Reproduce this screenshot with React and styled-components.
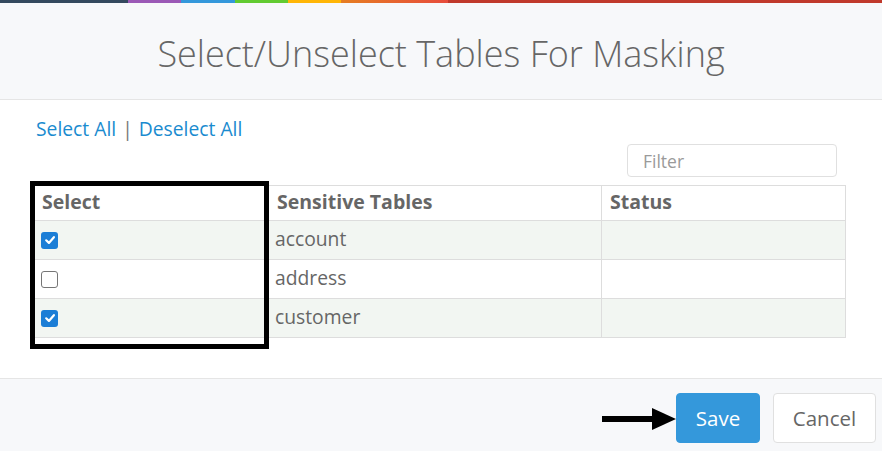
import React from "react";
import styled, { createGlobalStyle } from "styled-components";

const Global = createGlobalStyle`
  html, body { margin: 0; padding: 0; background: #fff; }
  body { font-family: "Open Sans", "Liberation Sans", sans-serif; color: #666; }
  * { box-sizing: border-box; }
`;

const Modal = styled.div`
  width: 882px;
  height: 451px;
  display: flex;
  flex-direction: column;
  background: #fff;
`;

const ColorBar = styled.div`
  height: 3px;
  display: flex;
`;

const Seg = styled.div`
  width: ${(p) => p.w}px;
  background: ${(p) => p.c};
  flex: ${(p) => (p.grow ? 1 : "none")};
`;

const Header = styled.div`
  height: 97px;
  background: #f7f8fa;
  border-bottom: 1px solid #e5e5e5;
  display: flex;
  align-items: center;
  justify-content: center;
  padding-top: 4px;
`;

const Title = styled.h1`
  margin: 0;
  font-size: 36px;
  font-weight: 300;
  color: #666;
`;

const Body = styled.div`
  flex: 1;
  padding: 17px 36px 0 33px;
  position: relative;
`;

const Links = styled.div`
  font-size: 19.3px;
  padding-left: 3px;
  line-height: 24px;
`;

const Link = styled.a`
  color: #1a8bcf;
  text-decoration: none;
  cursor: pointer;
`;

const Sep = styled.span`
  color: #777;
  margin: 0 6px;
`;

const FilterRow = styled.div`
  display: flex;
  justify-content: flex-end;
  margin-top: 3px;
  margin-bottom: 8px;
  padding-right: 9px;
`;

const FilterInput = styled.input`
  width: 210px;
  height: 33px;
  border: 1px solid #e0e0e0;
  border-radius: 4px;
  padding: 0 15px;
  font-family: "Open Sans", "Liberation Sans", sans-serif;
  font-size: 17.5px;
  color: #666;
  &::placeholder { color: #9a9a9a; }
`;

const TableWrap = styled.div`
  position: relative;
`;

const Table = styled.table`
  width: 813px;
  border-collapse: collapse;
  font-size: 19.3px;
`;

const Th = styled.th`
  text-align: left;
  font-weight: 700;
  font-size: 19.5px;
  color: #666;
  height: 35px;
  padding: 0 8px 2px;
  border: 1px solid #ddd;
  width: ${(p) => p.w}px;
  line-height: 1;
`;

const Tr = styled.tr`
  background: ${(p) => (p.alt ? "#f2f6f2" : "#fff")};
`;

const Td = styled.td`
  height: 39px;
  padding: 0 6px 2px;
  border: 1px solid #ddd;
  color: #666;
  vertical-align: middle;
  line-height: 1;
`;

const Check = styled.span`
  display: inline-flex;
  width: 17px;
  height: 17px;
  border-radius: 3px;
  align-items: center;
  justify-content: center;
  vertical-align: middle;
  margin-left: 1px;
  margin-top: -1px;
  background: ${(p) => (p.on ? "#1c7ed6" : "#fff")};
  border: ${(p) => (p.on ? "none" : "1.5px solid #767676")};
`;

const Highlight = styled.div`
  position: absolute;
  left: -3px;
  top: -4px;
  width: 239px;
  height: 168px;
  border: 5px solid #000;
  pointer-events: none;
`;

const Footer = styled.div`
  height: 73px;
  background: #f7f8fa;
  border-top: 1px solid #e5e5e5;
  display: flex;
  align-items: center;
  justify-content: flex-end;
  padding: 3px 6px 0 0;
  gap: 13px;
`;

const Arrow = styled.svg`
  margin-right: -13px;
  margin-top: 5px;
`;

const Button = styled.button`
  height: 50px;
  padding: 0;
  border-radius: 4px;
  font-family: "Open Sans", "Liberation Sans", sans-serif;
  font-size: 20.5px;
  background: ${(p) => (p.primary ? "#3498db" : "#fff")};
  color: ${(p) => (p.primary ? "#fff" : "#666")};
  border: 1px solid ${(p) => (p.primary ? "#3498db" : "#e0e0e0")};
  width: ${(p) => (p.primary ? 84 : 103)}px;
  margin-top: 3px;
`;

const CheckBox = ({ on }) => (
  <Check on={on ? 1 : 0}>
    {on && (
      <svg width="12" height="12" viewBox="0 0 12 12">
        <path d="M2.2 6.3 L4.9 8.9 L9.9 3.2" fill="none" stroke="#fff" strokeWidth="2.2" strokeLinecap="round" strokeLinejoin="round" />
      </svg>
    )}
  </Check>
);

const rows = [
  { name: "account", on: true },
  { name: "address", on: false },
  { name: "customer", on: true },
];

export default function App() {
  return (
    <>
      <Global />
      <Modal>
        <ColorBar>
          <Seg w={128} c="#34495e" />
          <Seg w={53} c="#9b59b6" />
          <Seg w={54} c="#3498db" />
          <Seg w={53} c="#62cb31" />
          <Seg w={53} c="#ffb606" />
          <Seg w={107} c="linear-gradient(90deg, #e67e22, #e74c3c)" />
          <Seg grow c="#c0392b" />
        </ColorBar>
        <Header>
          <Title>Select/Unselect Tables For Masking</Title>
        </Header>
        <Body>
          <Links>
            <Link>Select All</Link>
            <Sep>|</Sep>
            <Link>Deselect All</Link>
          </Links>
          <FilterRow>
            <FilterInput placeholder="Filter" />
          </FilterRow>
          <TableWrap>
            <Table>
              <thead>
                <tr>
                  <Th w={235}>Select</Th>
                  <Th w={333}>Sensitive Tables</Th>
                  <Th>Status</Th>
                </tr>
              </thead>
              <tbody>
                {rows.map((r, i) => (
                  <Tr key={r.name} alt={i % 2 === 0 ? 1 : 0}>
                    <Td>
                      <CheckBox on={r.on} />
                    </Td>
                    <Td>{r.name}</Td>
                    <Td />
                  </Tr>
                ))}
              </tbody>
            </Table>
            <Highlight />
          </TableWrap>
        </Body>
        <Footer>
          <Arrow width="74" height="22" viewBox="0 0 74 22">
            <rect x="0" y="8" width="52" height="6" fill="#000" />
            <polygon points="50,0 74,11 50,22" fill="#000" />
          </Arrow>
          <Button primary>Save</Button>
          <Button>Cancel</Button>
        </Footer>
      </Modal>
    </>
  );
}
